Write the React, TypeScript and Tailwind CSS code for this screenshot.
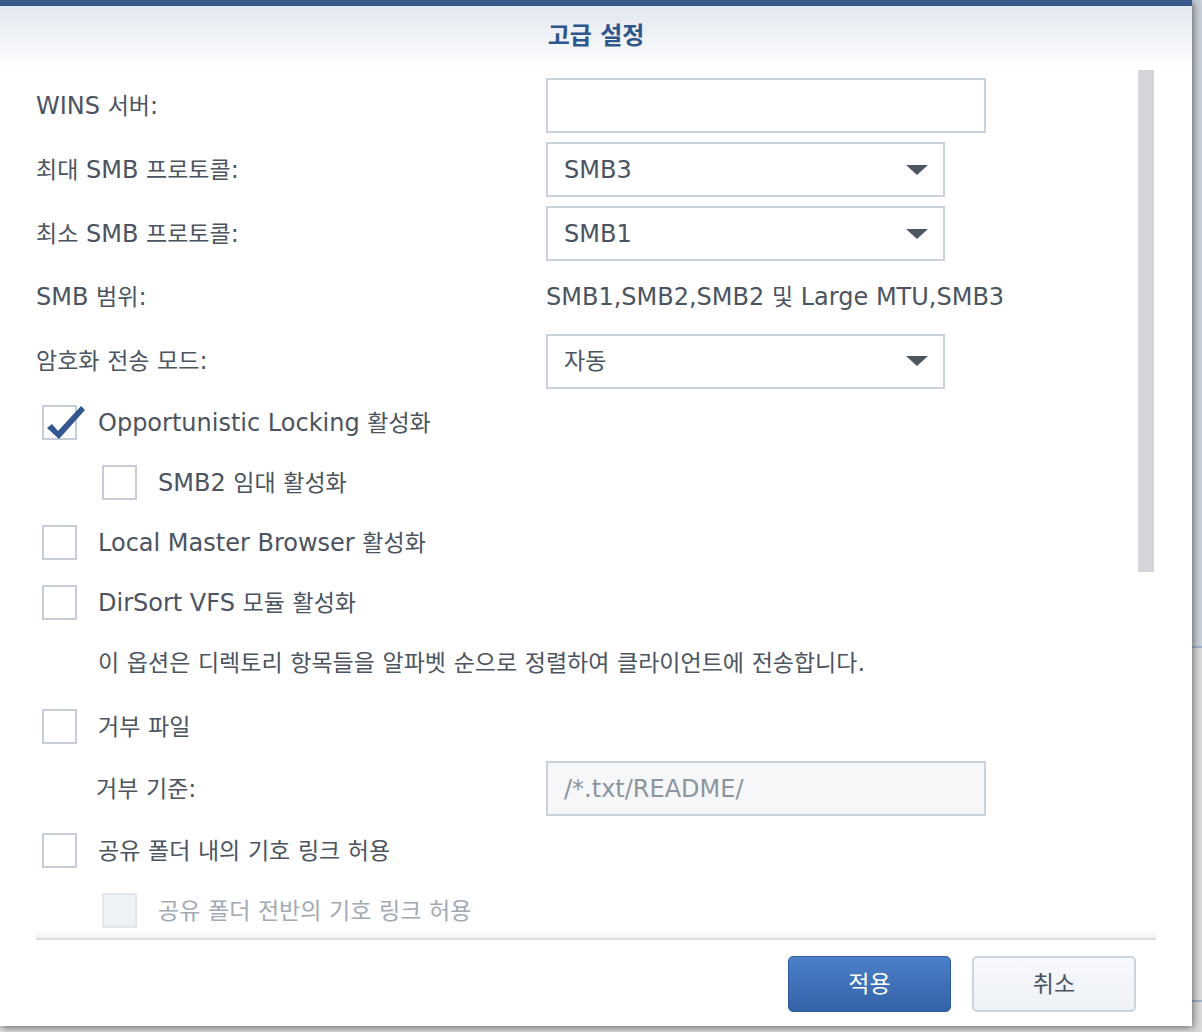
import React from "react";

const font = {
  fontFamily: '"DejaVu Sans", "Noto Sans CJK KR", sans-serif',
};

// Hangul runs get their own size so they sit like the original font
const T: React.FC<{ s: string }> = ({ s }) => (
  <span>
    {s.split(/([\u3131-\u318e\uac00-\ud7a3]+)/).map((part, i) =>
      /[\u3131-\u318e\uac00-\ud7a3]/.test(part) ? (
        <span key={i} className="text-[23px]">
          {part}
        </span>
      ) : (
        <React.Fragment key={i}>{part}</React.Fragment>
      )
    )}
  </span>
);

const Caret = () => (
  <svg width="22" height="10" viewBox="0 0 22 10" className="shrink-0">
    <path d="M0 0 H22 L11 10 Z" fill="#4d5661" />
  </svg>
);

const Select: React.FC<{ value: string }> = ({ value }) => (
  <div className="w-[399px] h-[55px] border-2 border-[#c9d1db] bg-white flex items-center justify-between pl-[16px] pr-[15px]">
    <T s={value} />
    <Caret />
  </div>
);

const Box: React.FC<{ checked?: boolean; disabled?: boolean }> = ({
  checked,
  disabled,
}) => (
  <div
    className={
      "relative w-[35px] h-[35px] shrink-0 border-2 " +
      (disabled ? "border-[#e3e7ec] bg-[#eef1f5]" : "border-[#c6cdd7] bg-white")
    }
  >
    {checked && (
      <svg
        width="42"
        height="40"
        viewBox="0 0 42 40"
        className="absolute left-[0px] top-[-4px]"
      >
        <path d="M3 25 L8 21 L14 28 L37 3 L41 7 L15 36 Z" fill="#34578f" />
      </svg>
    )}
  </div>
);

const Check: React.FC<{
  label: string;
  checked?: boolean;
  disabled?: boolean;
  indent?: boolean;
  h: string;
}> = ({ label, checked, disabled, indent, h }) => (
  <div
    className={
      "flex items-center gap-[21px] " +
      h +
      (indent ? " pl-[66px]" : " pl-[6px]") +
      (disabled ? " text-[#a2aab3]" : "")
    }
  >
    <Box checked={checked} disabled={disabled} />
    <T s={label} />
  </div>
);

const Row: React.FC<{ label: string; children: React.ReactNode; cls?: string }> = ({
  label,
  children,
  cls,
}) => (
  <div className={"flex items-center h-[55px] " + (cls ?? "")}>
    <div className="w-[510px] shrink-0">
      <T s={label} />
    </div>
    {children}
  </div>
);

export default function App() {
  return (
    <div
      className="w-[1202px] h-[1032px] bg-[#e4e5e7] flex overflow-hidden text-[24px] leading-[32px] text-[#4b5460]"
      style={font}
    >
      <div className="w-[1192px] h-[1026px] shrink-0 bg-white flex flex-col shadow-[1px_2px_8px_rgba(0,0,0,0.55)] relative z-10">
        <div className="h-[6px] bg-[#36588a]" />
        <div className="h-[60px] bg-gradient-to-b from-[#e2e7ef] to-[#fdfdfe] flex items-center justify-center">
          <span className="font-bold text-[#2f568c] text-[24px]">고급 설정</span>
        </div>

        <div className="h-[872px] flex overflow-hidden">
          <div className="w-[1138px] pl-[36px] flex flex-col">
            <Row label="WINS 서버:" cls="mt-[12px]">
              <div className="w-[440px] h-[55px] border-2 border-[#c9d1db] bg-white" />
            </Row>
            <Row label="최대 SMB 프로토콜:" cls="mt-[9px]">
              <Select value="SMB3" />
            </Row>
            <Row label="최소 SMB 프로토콜:" cls="mt-[9px]">
              <Select value="SMB1" />
            </Row>
            <Row label="SMB 범위:" cls="mt-[9px]">
              <T s="SMB1,SMB2,SMB2 및 Large MTU,SMB3" />
            </Row>
            <Row label="암호화 전송 모드:" cls="mt-[9px]">
              <Select value="자동" />
            </Row>

            <Check
              h="h-[60px] mt-[4px]"
              checked
              label="Opportunistic Locking 활성화"
            />
            <Check h="h-[60px]" indent label="SMB2 임대 활성화" />
            <Check h="h-[60px]" label="Local Master Browser 활성화" />
            <Check h="h-[60px]" label="DirSort VFS 모듈 활성화" />
            <div className="h-[62px] flex items-center pl-[62px]">
              <T s="이 옵션은 디렉토리 항목들을 알파벳 순으로 정렬하여 클라이언트에 전송합니다." />
            </div>
            <Check h="h-[65px]" label="거부 파일" />
            <div className="h-[59px] flex items-center">
              <div className="w-[510px] shrink-0 pl-[60px]">
                <T s="거부 기준:" />
              </div>
              <div className="w-[440px] h-[55px] border-2 border-[#c9d1db] bg-[#f5f7f9] flex items-center pl-[16px] text-[#8d949c]">
                /*.txt/README/
              </div>
            </div>
            <Check h="h-[65px]" label="공유 폴더 내의 기호 링크 허용" />
            <Check
              h="h-[55px] shrink-0"
              indent
              disabled
              label="공유 폴더 전반의 기호 링크 허용"
            />
          </div>
          <div className="w-[16px] pt-[4px]">
            <div className="h-[502px] bg-[#d4d5d8]" />
          </div>
        </div>

        <div className="mx-[36px] h-[2px] bg-[#dcdcdc] relative">
          <div className="absolute left-0 right-0 bottom-[2px] h-[8px] bg-gradient-to-b from-transparent to-[#f1f1f1]" />
        </div>

        <div className="flex-1 flex justify-end items-start gap-[21px] pt-[16px] pr-[56px]">
          <button className="w-[163px] h-[56px] rounded-[5px] border border-[#2f5b9c] bg-gradient-to-b from-[#4c80c8] to-[#3462a8] text-white text-[23px]">
            적용
          </button>
          <button className="w-[164px] h-[56px] rounded-[5px] border-2 border-[#cbd3dd] bg-gradient-to-b from-[#f7f9fc] to-[#eef1f6] text-[#4b5460] text-[23px]">
            취소
          </button>
        </div>
      </div>

      <div className="flex-1 flex flex-col">
        <div className="h-[646px] bg-[#c9d0d9]" />
        <div className="h-[2px] bg-[#9fb3ca]" />
        <div className="h-[352px] bg-[#dadada]" />
        <div className="h-[2px] bg-[#9fb3ca]" />
        <div className="flex-1 bg-[#dadada]" />
      </div>
    </div>
  );
}
